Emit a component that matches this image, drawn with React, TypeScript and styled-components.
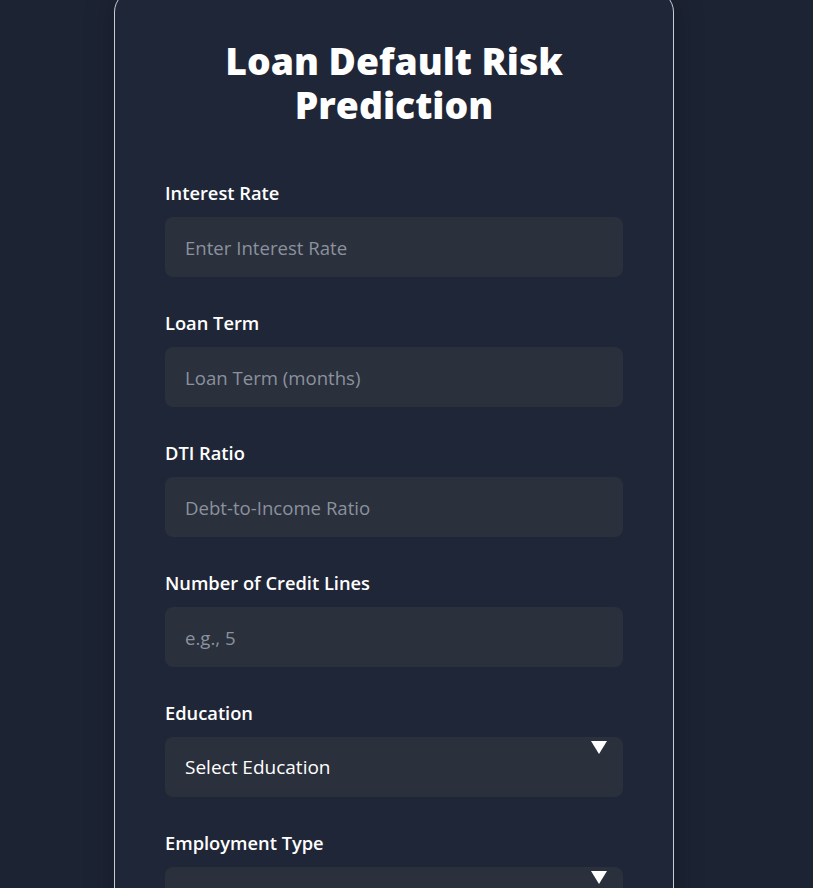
import React from "react";
import styled, { createGlobalStyle } from "styled-components";

const GlobalStyle = createGlobalStyle`
  html, body {
    margin: 0;
    padding: 0;
    background: #1c2333;
    overflow: hidden;
  }
  body {
    font-family: "Open Sans", "Noto Sans", sans-serif;
  }
`;

const Page = styled.div`
  min-height: 888px;
  display: flex;
  align-items: flex-start;
  padding-left: 114px;
`;

const Card = styled.div`
  box-sizing: border-box;
  width: 560px;
  margin-top: -10px;
  padding: 48px 50px 40px;
  background: #1f2637;
  border: 1px solid #c9ccd3;
  border-radius: 22px;
  box-shadow: 0 0 30px rgba(0, 0, 0, 0.25);
  display: flex;
  flex-direction: column;
`;

const Title = styled.h1`
  margin: 0 0 54px;
  text-align: center;
  color: #ffffff;
  font-family: "Open Sans", "DejaVu Sans", sans-serif;
  font-weight: 800;
  font-size: 37.3px;
  line-height: 44px;
`;

const Field = styled.div`
  display: flex;
  flex-direction: column;
  margin-bottom: 34px;
  position: relative;
`;

const Label = styled.label`
  color: #ffffff;
  font-weight: 600;
  font-size: 18.3px;
  line-height: 24px;
  margin-bottom: 12px;
`;

const Input = styled.input`
  box-sizing: border-box;
  height: 60px;
  width: 100%;
  padding: 0 20px;
  border: none;
  outline: none;
  border-radius: 8px;
  background: #2a303c;
  color: #ffffff;
  font-family: "Open Sans", "Noto Sans", sans-serif;
  font-size: 18.6px;
  &::placeholder {
    color: #8b929e;
  }
`;

const SelectBox = styled.div`
  box-sizing: border-box;
  height: 60px;
  width: 100%;
  padding: 0 20px;
  border-radius: 8px;
  background: #2a303c;
  color: #ffffff;
  font-size: 19px;
  display: flex;
  align-items: center;
  position: relative;
`;

const Arrow = styled.span`
  position: absolute;
  right: 16px;
  top: 4px;
  width: 0;
  height: 0;
  border-left: 8px solid transparent;
  border-right: 8px solid transparent;
  border-top: 13px solid #ffffff;
`;

const inputs = [
  { label: "Interest Rate", placeholder: "Enter Interest Rate" },
  { label: "Loan Term", placeholder: "Loan Term (months)" },
  { label: "DTI Ratio", placeholder: "Debt-to-Income Ratio" },
  { label: "Number of Credit Lines", placeholder: "e.g., 5" },
];

const selects = [
  { label: "Education", value: "Select Education" },
  { label: "Employment Type", value: "Select Employment Type" },
];

export default function App() {
  return (
    <>
      <GlobalStyle />
      <Page>
        <Card>
          <Title>
            Loan Default Risk
            <br />
            Prediction
          </Title>
          {inputs.map((f) => (
            <Field key={f.label}>
              <Label>{f.label}</Label>
              <Input placeholder={f.placeholder} />
            </Field>
          ))}
          {selects.map((s) => (
            <Field key={s.label}>
              <Label>{s.label}</Label>
              <SelectBox>
                {s.value}
                <Arrow />
              </SelectBox>
            </Field>
          ))}
        </Card>
      </Page>
    </>
  );
}
